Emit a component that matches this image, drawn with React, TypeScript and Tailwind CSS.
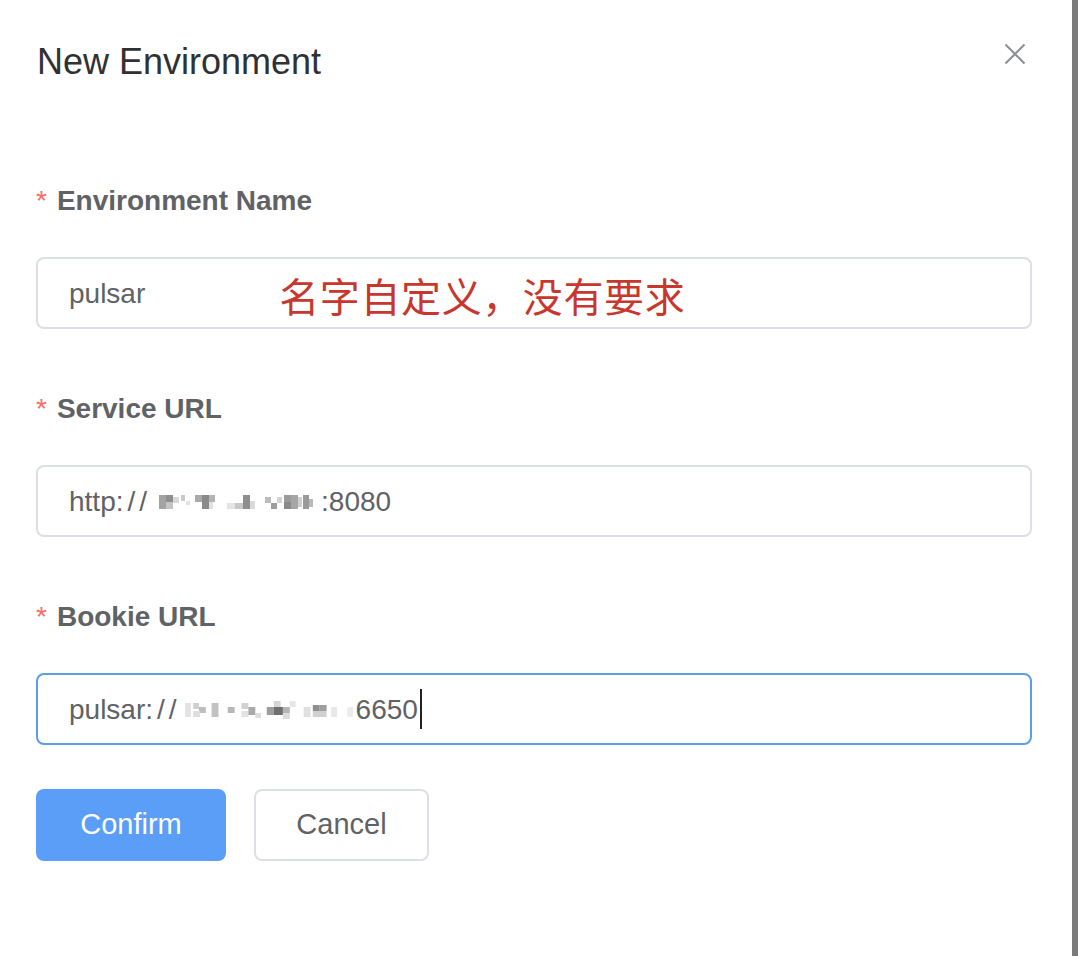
import React from "react";

const FONT = { fontFamily: '"Liberation Sans", Arial, "Noto Sans CJK SC", sans-serif' };

function Mosaic({ cells, width, sx = 1 }: { cells: [number, number, number, number, string][]; width: number; sx?: number }) {
  return (
    <svg width={width} height={24} viewBox={`0 0 ${width} 24`} className="shrink-0">
      {cells.map(([x, y, w, h, c], i) => (
        <rect key={i} x={x * sx} y={y} width={w * sx} height={h} fill={c} />
      ))}
    </svg>
  );
}

const httpCells: [number, number, number, number, string][] = [
  [2, 6, 7, 14, "#a3a3a3"],
  [9, 6, 7, 7, "#8f8f8f"],
  [9, 13, 7, 7, "#c4c4c4"],
  [16, 8, 6, 6, "#d8d8d8"],
  [24, 6, 4, 6, "#c9c9c9"],
  [29, 12, 4, 4, "#e2e2e2"],
  [38, 6, 7, 7, "#a9a9a9"],
  [45, 6, 7, 14, "#8a8a8a"],
  [52, 6, 6, 7, "#b4b4b4"],
  [52, 13, 4, 7, "#e0e0e0"],
  [70, 14, 8, 6, "#e4e4e4"],
  [78, 14, 8, 6, "#c8c8c8"],
  [86, 6, 7, 14, "#8e8e8e"],
  [93, 12, 5, 8, "#d9d9d9"],
  [108, 8, 6, 6, "#bdbdbd"],
  [114, 14, 6, 6, "#9e9e9e"],
  [120, 8, 5, 6, "#d4d4d4"],
  [127, 6, 7, 7, "#9b9b9b"],
  [127, 13, 7, 7, "#8a8a8a"],
  [134, 6, 7, 14, "#a5a5a5"],
  [141, 8, 4, 10, "#cfcfcf"],
  [146, 6, 6, 14, "#9a9a9a"],
  [152, 10, 4, 8, "#b9b9b9"],
];

const pulsarCells: [number, number, number, number, string][] = [
  [1, 6, 5, 14, "#e3e3e3"],
  [8, 6, 5, 6, "#cfcfcf"],
  [13, 10, 6, 6, "#bdbdbd"],
  [8, 14, 6, 6, "#dedede"],
  [24, 6, 6, 14, "#c2c2c2"],
  [38, 10, 6, 6, "#b8b8b8"],
  [50, 6, 6, 6, "#d2d2d2"],
  [50, 14, 6, 6, "#e1e1e1"],
  [56, 10, 6, 8, "#a9a9a9"],
  [62, 16, 5, 5, "#dddddd"],
  [72, 10, 6, 8, "#9c9c9c"],
  [78, 4, 6, 6, "#d6d6d6"],
  [78, 10, 8, 8, "#6f6f6f"],
  [86, 10, 6, 6, "#b5b5b5"],
  [86, 16, 6, 6, "#dcdcdc"],
  [92, 4, 5, 6, "#e6e6e6"],
  [104, 10, 6, 10, "#e0e0e0"],
  [112, 8, 6, 6, "#8e8e8e"],
  [118, 8, 6, 6, "#9f9f9f"],
  [112, 14, 12, 6, "#d0d0d0"],
  [128, 10, 5, 10, "#e8e8e8"],
  [142, 10, 5, 10, "#ececec"],
];

function Label({ text, first }: { text: string; first?: boolean }) {
  return (
    <div className={`${first ? "mt-[107px]" : "mt-[66px]"} flex h-[28px] items-center text-[28px] font-bold leading-[28px] text-[#606266]`}>
      <span className="mr-[10px] text-[#f56c6c] font-normal">*</span>
      <span>{text}</span>
    </div>
  );
}

export default function App() {
  return (
    <div className="flex h-[956px] w-[1078px] bg-white" style={FONT}>
      <div className="flex-1 pl-[36px] pr-[40px]">
        <div className="flex h-[80px] items-start justify-between pr-[6px]">
          <div className="mt-[44px] pl-[1px] text-[36px] leading-[36px] text-[#303133]">New Environment</div>
          <svg width="22" height="22" viewBox="0 0 22 22" className="mt-[43px]">
            <path d="M1.5 1.5 L20.5 20.5 M20.5 1.5 L1.5 20.5" stroke="#8c8f95" strokeWidth="2" fill="none" />
          </svg>
        </div>

        <Label text="Environment Name" first />
        <div className="mt-[42px] flex h-[72px] w-[996px] items-center rounded-[8px] border-2 border-[#dcdfe6] pl-[31px] text-[28px] text-[#606266]">
          <span className="mt-[1px]">pulsar</span>
          <span
            className="ml-[134px] mt-[3px] text-[40px] leading-[40px] tracking-[0.6px] text-[#c8372d]"
            style={{ fontFamily: '"Noto Sans CJK SC", sans-serif' }}
          >
            名字自定义，没有要求
          </span>
        </div>

        <Label text="Service URL" />
        <div className="mt-[42px] flex h-[72px] w-[996px] items-center rounded-[8px] border-2 border-[#dcdfe6] pl-[31px] text-[28px] text-[#606266]">
          <span className="mt-[1px]">
            http<span className="tracking-[4px]">://</span>
          </span>
          <span className="ml-[6px] flex items-center">
            <Mosaic cells={httpCells} width={164} />
          </span>
          <span className="mt-[1px]">:8080</span>
        </div>

        <Label text="Bookie URL" />
        <div className="mt-[42px] flex h-[72px] w-[996px] items-center rounded-[8px] border-2 border-[#5b9cec] pl-[31px] text-[28px] text-[#606266]">
          <span className="mt-[1px]">
            pulsar<span className="tracking-[4px]">://</span>
          </span>
          <span className="ml-[3px] flex items-center">
            <Mosaic cells={pulsarCells} width={172} sx={1.15} />
          </span>
          <span className="mt-[1px]">6650</span>
          <span className="ml-[2px] h-[40px] w-[2px] bg-[#222]" />
        </div>

        <div className="mt-[44px] flex gap-[28px]">
          <button className="h-[72px] w-[190px] rounded-[8px] bg-[#5a9ef8] text-[29px] text-white">Confirm</button>
          <button className="h-[72px] w-[175px] rounded-[8px] border-2 border-[#dcdfe6] bg-white text-[29px] text-[#606266]">
            Cancel
          </button>
        </div>
      </div>
      <div className="h-[956px] w-[6px] bg-[#7b7b7b]" />
    </div>
  );
}
